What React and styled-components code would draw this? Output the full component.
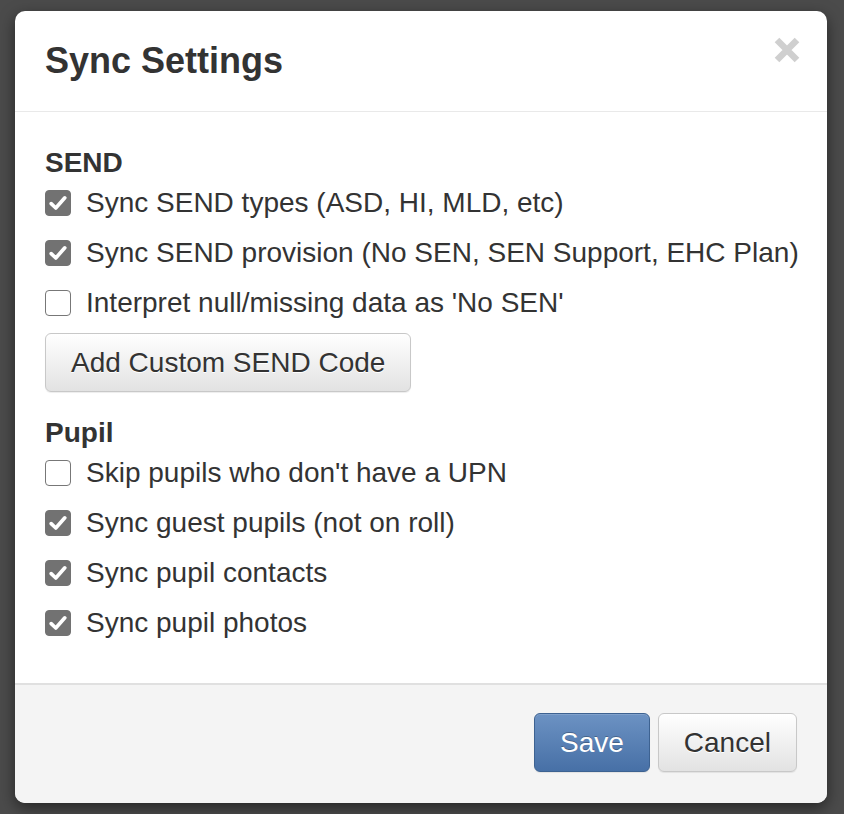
import React from "react";
import styled, { createGlobalStyle } from "styled-components";

const Global = createGlobalStyle`
  html, body { margin: 0; padding: 0; }
  body {
    background: #4b4b4b;
    font-family: "Liberation Sans", Arial, Helvetica, sans-serif;
    color: #333;
    width: 844px;
    height: 814px;
    overflow: hidden;
  }
  * { box-sizing: border-box; }
`;

const Page = styled.div`
  padding: 11px 17px 11px 15px;
`;

const Modal = styled.div`
  width: 812px;
  height: 792px;
  background: #fff;
  border-radius: 10px;
  box-shadow: 0 5px 15px rgba(0, 0, 0, 0.5);
  display: flex;
  flex-direction: column;
  overflow: hidden;
`;

const Header = styled.div`
  height: 101px;
  flex: none;
  display: flex;
  align-items: center;
  justify-content: space-between;
  padding: 0 27px 1px 30px;
  border-bottom: 1.5px solid #e9e9e9;
`;

const Title = styled.h4`
  margin: 0;
  font-size: 36px;
  font-weight: bold;
  line-height: 44px;
  color: #333;
`;

const Close = styled.button`
  border: 0;
  background: none;
  padding: 0;
  width: 26px;
  height: 26px;
  margin-top: -22px;
  cursor: pointer;
  display: flex;
`;

const Body = styled.div`
  flex: 1;
  padding: 33px 30px 0 30px;
`;

const Section = styled.div`
  display: flex;
  flex-direction: column;
  margin-bottom: ${(p) => p.$mb || 0}px;
`;

const SectionLabel = styled.div`
  font-size: 28px;
  font-weight: bold;
  line-height: 36px;
  margin-bottom: 2px;
`;

const Rows = styled.div`
  display: flex;
  flex-direction: column;
  gap: 10px;
`;

const Row = styled.label`
  display: flex;
  align-items: center;
  height: 40px;
  font-size: 28px;
  line-height: 40px;
  color: #333;
  cursor: pointer;
  white-space: nowrap;
`;

const Box = styled.span`
  flex: none;
  width: 26px;
  height: 26px;
  margin-right: 15px;
  border-radius: 4px;
  background: ${(p) => (p.$checked ? "#727272" : "#fff")};
  border: 1.7px solid ${(p) => (p.$checked ? "#727272" : "#777")};
  display: flex;
  align-items: center;
  justify-content: center;
`;

const Btn = styled.button`
  font-family: "Liberation Sans", Arial, Helvetica, sans-serif;
  font-size: 28px;
  height: 59px;
  padding: 0 25px;
  border-radius: 6px;
  cursor: pointer;
  line-height: 1;
  ${(p) =>
    p.$primary
      ? `
    color: #fff;
    background: linear-gradient(to bottom, #6c92c3 0%, #4770a6 100%);
    border: 1.5px solid #3d6291;
    text-shadow: 0 -1px 0 rgba(0,0,0,0.25);
    box-shadow: inset 0 1px 0 rgba(255,255,255,0.15), 0 1px 1px rgba(0,0,0,0.075);
  `
      : `
    color: #333;
    background: linear-gradient(to bottom, #ffffff 0%, #e2e2e2 100%);
    border: 1.5px solid #c8c8c8;
    text-shadow: 0 1px 0 #fff;
    box-shadow: inset 0 1px 0 rgba(255,255,255,0.15), 0 1px 1px rgba(0,0,0,0.075);
  `}
`;

const CustomBtn = styled(Btn)`
  align-self: flex-start;
  margin-top: 10px;
`;

const Footer = styled.div`
  height: 120px;
  flex: none;
  background: #f4f4f4;
  border-top: 2px solid #e0e0e0;
  display: flex;
  align-items: center;
  justify-content: flex-end;
  gap: 8px;
  padding: 0 30px 3px 0;
`;

const Check = () => (
  <svg width="18" height="16" viewBox="0 0 18 16">
    <path
      d="M2.2 8.6 L6.8 13 L15.8 2.8"
      fill="none"
      stroke="#fff"
      strokeWidth="3.6"
      strokeLinecap="round"
      strokeLinejoin="round"
    />
  </svg>
);

const Checkbox = ({ checked, children }) => (
  <Row>
    <Box $checked={checked}>{checked && <Check />}</Box>
    {children}
  </Row>
);

const sendItems = [
  { text: "Sync SEND types (ASD, HI, MLD, etc)", checked: true },
  { text: "Sync SEND provision (No SEN, SEN Support, EHC Plan)", checked: true },
  { text: "Interpret null/missing data as 'No SEN'", checked: false },
];

const pupilItems = [
  { text: "Skip pupils who don't have a UPN", checked: false },
  { text: "Sync guest pupils (not on roll)", checked: true },
  { text: "Sync pupil contacts", checked: true },
  { text: "Sync pupil photos", checked: true },
];

export default function App() {
  return (
    <>
      <Global />
      <Page>
        <Modal>
          <Header>
            <Title>Sync Settings</Title>
            <Close aria-label="Close">
              <svg width="26" height="26" viewBox="0 0 26 26">
                <path
                  d="M3 3 L23 23 M23 3 L3 23"
                  stroke="#cfcfcf"
                  strokeWidth="6.5"
                  strokeLinecap="butt"
                />
              </svg>
            </Close>
          </Header>
          <Body>
            <Section $mb={23}>
              <SectionLabel>SEND</SectionLabel>
              <Rows>
                {sendItems.map((it) => (
                  <Checkbox key={it.text} checked={it.checked}>
                    {it.text}
                  </Checkbox>
                ))}
              </Rows>
              <CustomBtn>Add Custom SEND Code</CustomBtn>
            </Section>
            <Section>
              <SectionLabel>Pupil</SectionLabel>
              <Rows>
                {pupilItems.map((it) => (
                  <Checkbox key={it.text} checked={it.checked}>
                    {it.text}
                  </Checkbox>
                ))}
              </Rows>
            </Section>
          </Body>
          <Footer>
            <Btn $primary>Save</Btn>
            <Btn>Cancel</Btn>
          </Footer>
        </Modal>
      </Page>
    </>
  );
}
